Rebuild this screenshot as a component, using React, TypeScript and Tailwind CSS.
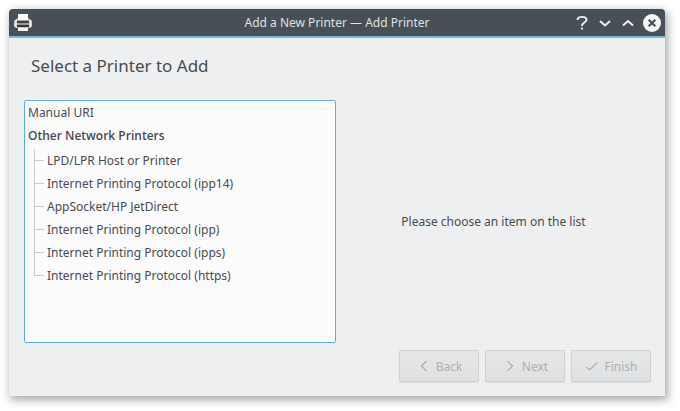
import React from 'react';

const NETWORK_PRINTERS = [
  'LPD/LPR Host or Printer',
  'Internet Printing Protocol (ipp14)',
  'AppSocket/HP JetDirect',
  'Internet Printing Protocol (ipp)',
  'Internet Printing Protocol (ipps)',
  'Internet Printing Protocol (https)',
];

function PrinterIcon() {
  return (
    <svg width="20" height="20" viewBox="0 0 20 20" aria-hidden="true">
      <path d="M1.500 7.500L4 5.500h12l2.500 2L19 13l-2 2H3l-2-2z" fill="#c3c6c8" />
      <path d="M1.500 7.500L4 6v8.500H3L1 13zM18.500 7.500L16 6v8.500h1l2-1.500z" fill="#dfe1e2" />
      <path d="M5 1h10v6H5z" fill="#fcfcfc" />
      <path d="M4 7h12v1H4z" fill="#a2a5a7" />
      <path d="M4 8h12v2H4z" fill="#45413f" />
      <path d="M4 10h12v2H4z" fill="#a09a97" />
      <path d="M4 12h12v2H4z" fill="#33363a" />
      <path d="M5 14h10v4H5z" fill="#f4f4f4" />
      <path d="M5 14h10v1H5z" fill="#c3c5c6" />
    </svg>
  );
}

interface StrokeIconProps {
  d: string;
  width?: number;
}

function StrokeIcon({ d, width = 1.2 }: StrokeIconProps) {
  return (
    <svg
      width="16"
      height="16"
      viewBox="0 0 16 16"
      fill="none"
      stroke="currentColor"
      strokeWidth={width}
      aria-hidden="true"
    >
      <path d={d} />
    </svg>
  );
}

interface WizardButtonProps {
  label: string;
  icon: string;
}

function WizardButton({ label, icon }: WizardButtonProps) {
  return (
    <button
      disabled
      className="flex h-8 w-20 items-center justify-center gap-1 rounded-xs border border-[#d0d2d3] bg-linear-to-b from-[#e7e8e9] to-[#dfe0e2] text-[#adafb1] shadow-[0_1px_1px_#d9dadb]"
    >
      <StrokeIcon d={icon} />
      {label}
    </button>
  );
}

export default function App() {
  return (
    <div className="flex min-h-screen flex-col bg-white pt-[9px] pr-[15px] pb-[15px] pl-[9px] font-['Noto_Sans',sans-serif] text-[12px] leading-[23px] text-[#484c4f]">
      <div className="flex flex-1 flex-col rounded-t-sm bg-[#eeeff1] shadow-[2px_3px_9px_1px_rgba(60,66,66,0.45)]">
        <header className="flex h-[29px] items-center rounded-t-sm border-b-2 border-[#79b9dc] bg-[#475057] px-1 text-[#dfe1e2]">
          <div className="flex flex-1">
            <PrinterIcon />
          </div>
          <h1>Add a New Printer — Add Printer</h1>
          <div className="flex flex-1 items-center justify-end gap-[7px] text-[#eff0f1]">
            <button aria-label="Help">
              <StrokeIcon d="M3.500 5C3.500 0.800 12.500 0.800 12.500 5C12.500 7.500 8 7.200 8 11M8 12.500V14.500" width={1.9} />
            </button>
            <button aria-label="Minimize">
              <StrokeIcon d="M3 6L8 10.500L13 6" width={2} />
            </button>
            <button aria-label="Maximize">
              <StrokeIcon d="M3 10.500L8 6L13 10.500" width={2} />
            </button>
            <button aria-label="Close">
              <svg width="18" height="18" viewBox="0 0 18 18" aria-hidden="true">
                <circle cx="9" cy="9" r="9" fill="#f4f5f5" />
                <path d="M5.700 5.700l6.600 6.600M12.300 5.700l-6.600 6.600" stroke="#475057" strokeWidth="2.2" />
              </svg>
            </button>
          </div>
        </header>

        <main className="flex flex-1 flex-col pr-[14px] pb-[14px] pl-[15px]">
          <h2 className="px-[7px] pt-[14px] pb-5 text-[17px] leading-7">Select a Printer to Add</h2>

          <div className="grid flex-1 grid-cols-[99fr_100fr]">
            <div className="rounded-xs border border-[#5fafd6] bg-[#fcfcfc]">
              <ul>
                <li className="px-[3px]">Manual URI</li>
                <li>
                  <span className="block px-[3px] pb-[2px] font-['Open_Sans',sans-serif] font-semibold">
                    Other Network Printers
                  </span>
                  <ul className="pl-[9px]">
                    {NETWORK_PRINTERS.map((name) => (
                      <li key={name} className="group flex">
                        <span className="flex w-[13px] flex-col" aria-hidden="true">
                          <span className="h-3 w-[10px] border-b border-l border-[#c9cbcc]" />
                          <span className="flex-1 border-l border-[#c9cbcc] group-last:border-transparent" />
                        </span>
                        {name}
                      </li>
                    ))}
                  </ul>
                </li>
              </ul>
            </div>
            <p className="flex items-center justify-center">Please choose an item on the list</p>
          </div>

          <footer className="flex justify-end gap-[6px] pt-[7px]">
            <WizardButton label="Back" icon="M10.500 3L5.500 8L10.500 13" />
            <WizardButton label="Next" icon="M5.500 3L10.500 8L5.500 13" />
            <WizardButton label="Finish" icon="M2.500 9L5.500 12L13.500 4.500" />
          </footer>
        </main>
      </div>
    </div>
  );
}
